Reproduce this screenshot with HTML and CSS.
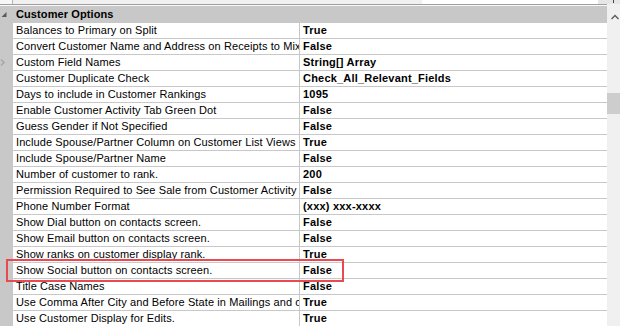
FILE: index.html
```html
<!doctype html>
<html>
<head>
<meta charset="utf-8">
<title>Customer Options</title>
<link rel="stylesheet" href="styles.css">
</head>
<body>

	<!-- toolbar remains above the grid -->
	<div class="toolbar">
		<div class="tool-btn"></div>
		<div class="tool-fill"></div>
		<div class="tool-search"></div>
		<div class="tool-end"><span class="tool-mark"></span></div>
	</div>

	<div class="frame">
		<div class="grid">
			<div class="category">
				<div class="gutter">
					<svg width="13" height="17" viewBox="0 0 13 17"><polygon points="1.5,11 6.5,6 6.5,11" fill="#5a5a5a"/></svg>
				</div>
				<div class="cat-label">Customer Options</div>
			</div>

			<div class="row"><div class="gutter"></div><div class="name">Balances to Primary on Split</div><div class="value">True</div></div>
			<div class="row"><div class="gutter"></div><div class="name">Convert Customer Name and Address on Receipts to Mix</div><div class="value">False</div></div>
			<div class="row">
				<div class="gutter">
					<svg width="13" height="15" viewBox="0 0 13 15"><polyline points="1,4.5 4,7.5 1,10.5" fill="none" stroke="#a8a8a8" stroke-width="1.6"/></svg>
				</div>
				<div class="name">Custom Field Names</div><div class="value">String[] Array</div>
			</div>
			<div class="row"><div class="gutter"></div><div class="name">Customer Duplicate Check</div><div class="value">Check_All_Relevant_Fields</div></div>
			<div class="row"><div class="gutter"></div><div class="name">Days to include in Customer Rankings</div><div class="value">1095</div></div>
			<div class="row"><div class="gutter"></div><div class="name">Enable Customer Activity Tab Green Dot</div><div class="value">False</div></div>
			<div class="row"><div class="gutter"></div><div class="name">Guess Gender if Not Specified</div><div class="value">False</div></div>
			<div class="row"><div class="gutter"></div><div class="name">Include Spouse/Partner Column on Customer List Views</div><div class="value">True</div></div>
			<div class="row"><div class="gutter"></div><div class="name">Include Spouse/Partner Name</div><div class="value">False</div></div>
			<div class="row"><div class="gutter"></div><div class="name">Number of customer to rank.</div><div class="value">200</div></div>
			<div class="row"><div class="gutter"></div><div class="name">Permission Required to See Sale from Customer Activity</div><div class="value">False</div></div>
			<div class="row"><div class="gutter"></div><div class="name">Phone Number Format</div><div class="value">(xxx) xxx-xxxx</div></div>
			<div class="row"><div class="gutter"></div><div class="name">Show Dial button on contacts screen.</div><div class="value">False</div></div>
			<div class="row"><div class="gutter"></div><div class="name">Show Email button on contacts screen.</div><div class="value">False</div></div>
			<div class="row"><div class="gutter"></div><div class="name">Show ranks on customer display rank.</div><div class="value">True</div></div>
			<div class="row"><div class="gutter"></div><div class="name">Show Social button on contacts screen.</div><div class="value">False</div></div>
			<div class="row"><div class="gutter"></div><div class="name">Title Case Names</div><div class="value">False</div></div>
			<div class="row"><div class="gutter"></div><div class="name">Use Comma After City and Before State in Mailings and o</div><div class="value">True</div></div>
			<div class="row"><div class="gutter"></div><div class="name">Use Customer Display for Edits.</div><div class="value">True</div></div>

			<!-- red callout round the Show Social row -->
			<div class="callout"></div>
		</div>

		<div class="scrollbar">
			<svg class="arrow-up" width="13" height="10" viewBox="0 0 13 10"><polyline points="4.5,7 8,3.5 11.5,7" fill="none" stroke="#606060" stroke-width="1.5"/></svg>
			<div class="thumb"></div>
		</div>
	</div>

</body>
</html>
```

FILE: styles.css
```css
/*Page*/
body{
	margin: 0;
	width: 620px;
	height: 326px;
	overflow: hidden;
	background: #f0f0f0;
	font-family: "Liberation Sans", Arial, sans-serif;
	font-size: 11px;
	color: #000;
}

/*Toolbar strip*/
.toolbar{
	display: flex;
	height: 4px;
	background: #f0f0f0;
}
.tool-btn{
	width: 12px;
	background: #f7f7f7;
	border-right: 1px solid #a9b6c8;
}
.tool-fill{
	width: 409px;
}
.tool-search{
	width: 176px;
	background: #fff;
}
.tool-end{
	flex: 1;
	background: #e6e6e6;
	position: relative;
}
.tool-mark{
	position: absolute;
	left: 15px;
	top: 0;
	width: 1px;
	height: 3px;
	background: #444;
}

/*Frame: grid + scrollbar*/
.frame{
	display: flex;
	height: 322px;
}
.grid{
	position: relative;
	width: 607px;
	background: #c8c8c8;
	border-top: 1px solid #a0a0a0;
	padding-top: 1px;
	box-shadow: inset 0 1px 0 #f8f8f8;
}

.category{
	display: flex;
	height: 17px;
	line-height: 17px;
}
.cat-label{
	padding-left: 3px;
	font-weight: bold;
	letter-spacing: 0.1px;
}

.gutter{
	width: 13px;
	flex: none;
}
.gutter svg{
	display: block;
}

.row{
	display: flex;
	height: 15px;
	line-height: 15px;
	margin-bottom: 1px;
}
.name{
	width: 283px;
	padding-left: 3px;
	margin-right: 1px;
	background: #fff;
	white-space: nowrap;
	overflow: hidden;
	letter-spacing: 0.1px;
}
.value{
	flex: 1;
	padding-left: 3px;
	background: #fff;
	font-weight: bold;
	white-space: nowrap;
	overflow: hidden;
	letter-spacing: 0.2px;
}

.callout{
	position: absolute;
	left: 6px;
	top: 254px;
	width: 338px;
	height: 23px;
	box-sizing: border-box;
	border: 2px solid #e84a50;
}

/*Scrollbar*/
.scrollbar{
	flex: 1;
	background: #f0f0f0;
	padding-top: 8px;
}
.arrow-up{
	display: block;
}
.thumb{
	margin-top: 71px;
	height: 21px;
	background: #cdcdcd;
}
```
